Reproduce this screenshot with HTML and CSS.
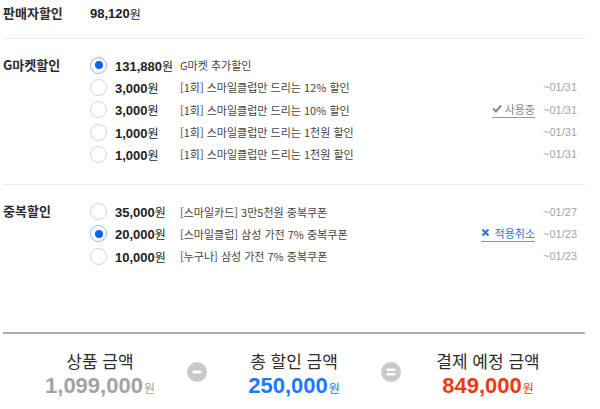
FILE: index.html
```html
<!DOCTYPE html>
<html lang="ko">
<head>
    <meta charset="UTF-8">
    <meta name="viewport" content="width=device-width, initial-scale=1.0">
    <title>할인 선택</title>
    <link rel="stylesheet" href="styles.css">
</head>
<body>
    <div class="page">
        <div class="section seller">
            <div class="label">판매자할인</div>
            <div class="seller-price"><b class="num">98,120</b>원</div>
        </div>

        <div class="section">
            <div class="label">G마켓할인</div>
            <ul class="options">
                <li class="option">
                    <span class="radio on"></span>
                    <span class="amount"><b class="num">131,880</b>원</span>
                    <span class="desc">G마켓 추가할인</span>
                </li>
                <li class="option">
                    <span class="radio"></span>
                    <span class="amount"><b class="num">3,000</b>원</span>
                    <span class="desc">[1회] 스마일클럽만 드리는 12% 할인</span>
                    <span class="date">~01/31</span>
                </li>
                <li class="option">
                    <span class="radio"></span>
                    <span class="amount"><b class="num">3,000</b>원</span>
                    <span class="desc">[1회] 스마일클럽만 드리는 10% 할인</span>
                    <span class="state used">
                        <svg width="10" height="9" viewBox="0 0 10 9"><polyline points="1,4.5 4,7.5 9,1.5" fill="none" stroke="#888" stroke-width="2"/></svg>사용중
                    </span>
                    <span class="date">~01/31</span>
                </li>
                <li class="option">
                    <span class="radio"></span>
                    <span class="amount"><b class="num">1,000</b>원</span>
                    <span class="desc">[1회] 스마일클럽만 드리는 1천원 할인</span>
                    <span class="date">~01/31</span>
                </li>
                <li class="option">
                    <span class="radio"></span>
                    <span class="amount"><b class="num">1,000</b>원</span>
                    <span class="desc">[1회] 스마일클럽만 드리는 1천원 할인</span>
                    <span class="date">~01/31</span>
                </li>
            </ul>
        </div>

        <div class="section last">
            <div class="label">중복할인</div>
            <ul class="options">
                <li class="option">
                    <span class="radio"></span>
                    <span class="amount"><b class="num">35,000</b>원</span>
                    <span class="desc">[스마일카드] 3만5천원 중복쿠폰</span>
                    <span class="date">~01/27</span>
                </li>
                <li class="option">
                    <span class="radio on"></span>
                    <span class="amount"><b class="num">20,000</b>원</span>
                    <span class="desc">[스마일클럽] 삼성 가전 7% 중복쿠폰</span>
                    <span class="state cancel">
                        <svg width="9" height="9" viewBox="0 0 9 9"><path d="M1.5 1.5l6 6M7.5 1.5l-6 6" stroke="#2f74e0" stroke-width="2.2"/></svg>적용취소
                    </span>
                    <span class="date">~01/23</span>
                </li>
                <li class="option">
                    <span class="radio"></span>
                    <span class="amount"><b class="num">10,000</b>원</span>
                    <span class="desc">[누구나] 삼성 가전 7% 중복쿠폰</span>
                    <span class="date">~01/23</span>
                </li>
            </ul>
        </div>

        <div class="summary">
            <div class="sum-item">
                <div class="sum-title">상품 금액</div>
                <div class="sum-price gray"><b class="num">1,099,000</b>원</div>
            </div>
            <div class="operator">
                <svg width="20" height="20" viewBox="0 0 20 20"><circle cx="10" cy="10" r="10" fill="#c9c9cd"/><rect x="5.5" y="8.5" width="9" height="3" rx="1" fill="#fff"/></svg>
            </div>
            <div class="sum-item">
                <div class="sum-title">총 할인 금액</div>
                <div class="sum-price blue"><b class="num">250,000</b>원</div>
            </div>
            <div class="operator">
                <svg width="20" height="20" viewBox="0 0 20 20"><circle cx="10" cy="10" r="10" fill="#c9c9cd"/><rect x="5.5" y="6.5" width="9" height="2.6" rx="1" fill="#fff"/><rect x="5.5" y="10.9" width="9" height="2.6" rx="1" fill="#fff"/></svg>
            </div>
            <div class="sum-item">
                <div class="sum-title">결제 예정 금액</div>
                <div class="sum-price red"><b class="num">849,000</b>원</div>
            </div>
        </div>
    </div>
</body>
</html>
```

FILE: styles.css
```css
:root {
    --text: #333;
    --line: #ececec;
    --muted: #a3a3a3;
    --blue: #1a7bff;
    --red: #f03a14;
}

* {
    margin: 0;
    padding: 0;
    box-sizing: border-box;
}

body {
    background-color: #fff;
    color: var(--text);
    font-family: "Noto Sans CJK KR", "Liberation Sans", sans-serif;
    font-size: 12px;
}

ul {
    list-style: none;
}

.num {
    font-family: "Liberation Sans", Arial, sans-serif;
    font-weight: bold;
}

.page {
    width: 582px;
    margin-left: 3px;
}

.section {
    display: flex;
    padding: 15px 0 19px;
    border-bottom: 1px solid var(--line);
}

.section.seller {
    height: 39px;
    padding: 4px 0 0;
    align-items: flex-start;
}

.section.last {
    padding: 15px 0 65px;
    border-bottom: 2px solid #adadad;
}

.label {
    width: 87px;
    flex-shrink: 0;
    font-size: 13px;
    font-weight: bold;
    line-height: 21px;
    color: #2b2b2b;
}

.seller .label {
    line-height: 18px;
}

.seller-price {
    display: flex;
    align-items: center;
    height: 18px;
    font-size: 12px;
    color: #222;
}

.seller-price .num {
    font-size: 13px;
}

.options {
    flex: 1;
    padding-right: 8px;
}

.option {
    display: flex;
    align-items: center;
    height: 22.3px;
}

.radio {
    width: 17px;
    height: 17px;
    border: 1px solid #d2d2d2;
    border-radius: 50%;
    margin-right: 8px;
    flex-shrink: 0;
    position: relative;
}

.radio.on {
    border-color: #8bb8f8;
}

.radio.on::after {
    content: "";
    position: absolute;
    left: 3.5px;
    top: 3.5px;
    width: 8px;
    height: 8px;
    border-radius: 50%;
    background-color: #0b63f0;
}

.amount {
    width: 65px;
    flex-shrink: 0;
    font-size: 12px;
    color: #222;
    white-space: nowrap;
}

.amount .num {
    font-size: 13px;
}

.desc {
    flex: 1;
    font-size: 11px;
    color: #444;
    white-space: nowrap;
}

.state {
    display: flex;
    align-items: center;
    gap: 3px;
    font-size: 11px;
    line-height: 14px;
    padding-bottom: 1px;
    margin-right: 7px;
}

.state.used {
    color: #8a8a8a;
    border-bottom: 1px solid #9a9a9a;
}

.state.cancel {
    color: #2f74e0;
    border-bottom: 1px solid #5b95ec;
    gap: 5px;
}

.date {
    width: 35px;
    flex-shrink: 0;
    text-align: right;
    font-family: "Liberation Sans", Arial, sans-serif;
    font-size: 11px;
    color: var(--muted);
}

.summary {
    display: flex;
    padding-top: 15px;
}

.sum-item {
    flex: 1;
    text-align: center;
}

.sum-title {
    height: 24px;
    font-size: 17px;
    line-height: 24px;
    color: #2e2e2e;
}

.sum-price {
    display: flex;
    justify-content: center;
    align-items: baseline;
    height: 28px;
    font-size: 12px;
    line-height: 26px;
}

.sum-price .num {
    font-size: 22px;
    margin-right: 1px;
}

.sum-price.gray {
    color: var(--muted);
}

.sum-price.blue {
    color: var(--blue);
}

.sum-price.red {
    color: var(--red);
}

.operator {
    width: 20px;
    height: 20px;
    margin: 13px -10px 0;
    flex-shrink: 0;
}
```
